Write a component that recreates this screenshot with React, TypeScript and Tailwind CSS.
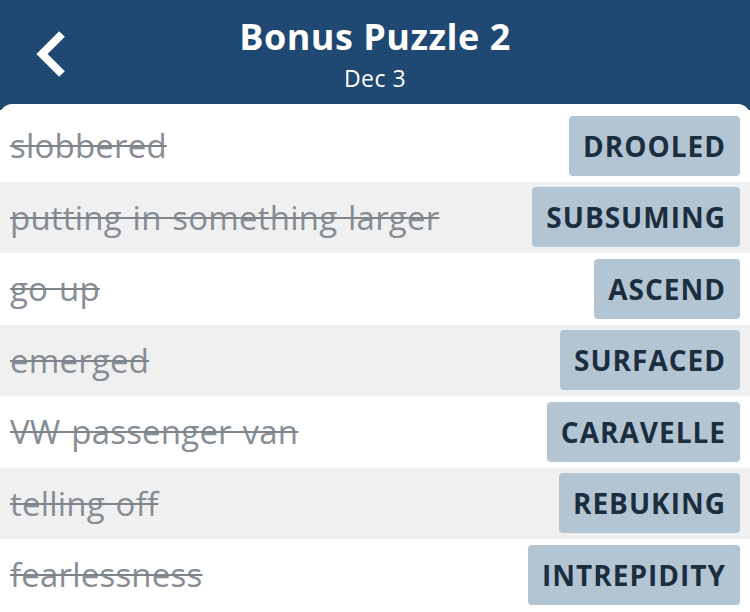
const rows = [
  { clue: "slobbered", answer: "DROOLED" },
  { clue: "putting in something larger", answer: "SUBSUMING" },
  { clue: "go up", answer: "ASCEND" },
  { clue: "emerged", answer: "SURFACED" },
  { clue: "VW passenger van", answer: "CARAVELLE" },
  { clue: "telling off", answer: "REBUKING" },
  { clue: "fearlessness", answer: "INTREPIDITY" },
];

export default function App() {
  return (
    <div className="w-[750px] h-[612px] overflow-hidden bg-[#1f4872] font-['Open_Sans',sans-serif]">
      {/* Header */}
      <div className="relative h-[104px] flex flex-col items-center text-white">
        <button className="absolute left-[34px] top-[30px]">
          <svg width="34" height="48" viewBox="0 0 34 48" fill="none">
            <polyline points="28,4 8,24 28,44" stroke="white" strokeWidth="8" strokeLinecap="butt" strokeLinejoin="miter" />
          </svg>
        </button>
        <h1 className="mt-[12px] text-[36px] leading-[50px] font-bold tracking-[0.5px]">Bonus Puzzle 2</h1>
        <p className="mt-[2px] text-[23px] leading-[28px] font-normal tracking-[0.5px]">Dec 3</p>
      </div>

      {/* Word list */}
      <div className="bg-white rounded-t-[12px] pt-[6px] h-[508px]">
        {rows.map((r, i) => (
          <div
            key={r.clue}
            className={`h-[71.5px] flex items-center justify-between pl-[10px] pr-[10px] ${
              i % 2 === 1 ? "bg-[#f0f0f0]" : "bg-white"
            }`}
          >
            <span className="text-[33px] tracking-[0.2px] [word-spacing:2px] text-[#878d94] line-through decoration-[2px] decoration-[#7d848b]">
              {r.clue}
            </span>
            <span className="h-[60px] flex items-center px-[14px] rounded-[4px] bg-[#b3c5d3] text-[#1b2e40] text-[28px] font-bold tracking-[1px]">
              {r.answer}
            </span>
          </div>
        ))}
      </div>
    </div>
  );
}
